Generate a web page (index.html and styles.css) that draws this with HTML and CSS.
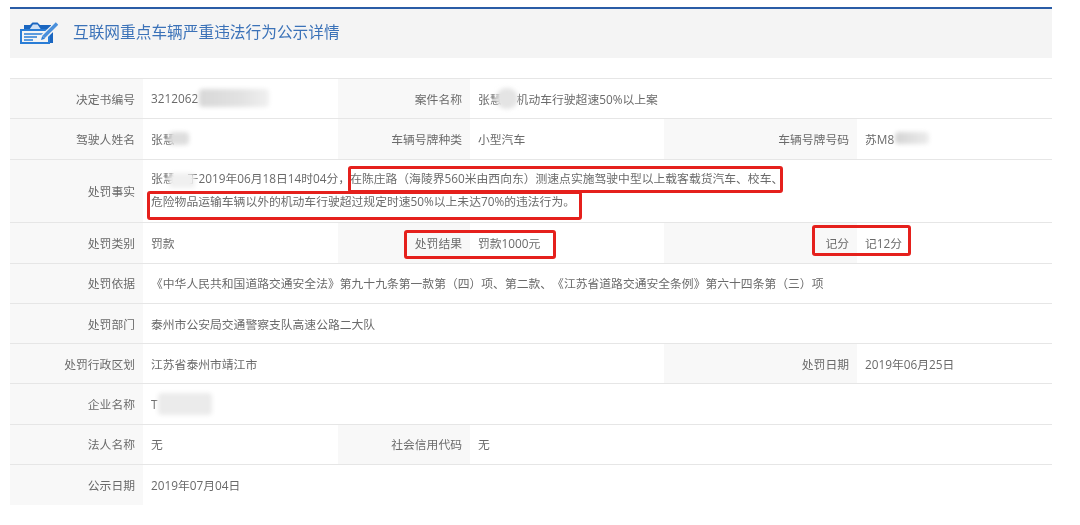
FILE: index.html
```html
<!DOCTYPE html>
<html lang="zh-CN">
<head>
<meta charset="utf-8">
<title>互联网重点车辆严重违法行为公示详情</title>
<link rel="stylesheet" href="styles.css">
</head>
<body>
<main class="page">
  <header class="head">
    <svg class="head-icon" width="38" height="24" viewBox="0 0 38 24" aria-hidden="true">
      <path d="M4 3h6l2.500-2.500h5L20 3h11v5h2v13H4z" fill="#1a66c0"/>
      <path d="M9.500 7.500l3.500-5h4.500l3.500 5z" fill="#cfe0f4"/>
      <path d="M1 8h28v13H1z" fill="#f4f4f4" stroke="#2a7dd6" stroke-width="2"/>
      <path d="M4 12h19M4 15h13M4 18h9" stroke="#2a7dd6" stroke-width="1.400" fill="none"/>
      <path d="M37.500 1.500L23.500 15" stroke="#f4f4f4" stroke-width="6" fill="none"/>
      <path d="M37 1.500L23.500 15" stroke="#4a90dc" stroke-width="3.400" fill="none"/>
      <path d="M21 18l1.200-4 2.800 2.800z" fill="#2a7dd6"/>
    </svg>
    <h1 class="head-title">互联网重点车辆严重违法行为公示详情</h1>
  </header>

  <section class="grid">
    <div class="label">决定书编号</div>
    <div class="value">3212062<span class="smudge smudge-a"></span></div>
    <div class="label">案件名称</div>
    <div class="value span-3">张慧<span class="smudge smudge-b"></span>机动车行驶超速50%以上案</div>

    <div class="label">驾驶人姓名</div>
    <div class="value">张慧<span class="smudge smudge-c"></span></div>
    <div class="label">车辆号牌种类</div>
    <div class="value">小型汽车</div>
    <div class="label">车辆号牌号码</div>
    <div class="value">苏M8<span class="smudge smudge-d"></span></div>

    <div class="label tall">处罚事实</div>
    <div class="value span-5 tall"><p class="fact">张慧<span class="smudge smudge-e"></span>于2019年06月18日14时04分，在陈庄路（海陵界560米由西向东）测速点实施驾驶中型以上载客载货汽车、校车、<br>危险物品运输车辆以外的机动车行驶超过规定时速50%以上未达70%的违法行为。</p></div>

    <div class="label">处罚类别</div>
    <div class="value">罚款</div>
    <div class="label">处罚结果</div>
    <div class="value">罚款1000元</div>
    <div class="label">记分</div>
    <div class="value">记12分</div>

    <div class="label">处罚依据</div>
    <div class="value span-5">《中华人民共和国道路交通安全法》第九十九条第一款第（四）项、第二款、《江苏省道路交通安全条例》第六十四条第（三）项</div>

    <div class="label">处罚部门</div>
    <div class="value span-5">泰州市公安局交通警察支队高速公路二大队</div>

    <div class="label">处罚行政区划</div>
    <div class="value span-3">江苏省泰州市靖江市</div>
    <div class="label">处罚日期</div>
    <div class="value">2019年06月25日</div>

    <div class="label">企业名称</div>
    <div class="value span-5">T<span class="smudge smudge-f"></span></div>

    <div class="label">法人名称</div>
    <div class="value">无</div>
    <div class="label">社会信用代码</div>
    <div class="value span-3">无</div>

    <div class="label last">公示日期</div>
    <div class="value span-5 last">2019年07月04日</div>
  </section>
</main>
<div class="mark mark-1"></div>
<div class="mark mark-2"></div>
<div class="mark mark-3"></div>
<div class="mark mark-4"></div>
</body>
</html>
```
FILE: styles.css
```css
* { box-sizing: border-box; }
html, body { margin: 0; height: 525px; overflow: hidden; background: #fff; }
body {
  position: relative;
  font-family: "Open Sans", "Noto Sans CJK SC", sans-serif;
  font-size: 11.8px;
  color: #6a6a6a;
  text-spacing-trim: space-all;
}
.page { padding: 7px 28px 0 10px; filter: blur(0.35px); }
.head {
  height: 51px;
  border-top: 2px solid #2a5ca6;
  background: #f4f4f4;
  display: flex;
  align-items: center;
  gap: 15px;
  padding: 0 0 4px 10px;
  margin-bottom: 20px;
}
.head-icon { flex: none; margin-top: 4px; }
.head-title { margin: 0; font-size: 15.7px; font-weight: 400; color: #3b72b8; }
.grid {
  display: grid;
  grid-template-columns: 133px 195px 132px 194px 193px 195px;
  grid-template-rows: 40.3px 40.3px 63.7px;
  grid-auto-rows: 40.3px;
  border-top: 1px solid #e6e6e6;
}
.grid > div {
  display: flex;
  align-items: center;
  border-bottom: 1px solid #e6e6e6;
  padding-bottom: 1px;
}
.grid > .last { border-bottom: 0; }
.label {
  justify-content: flex-end;
  padding-right: 8px;
  background: #f8f8f8;
}
.value { padding-left: 8px; white-space: nowrap; }
.span-3 { grid-column: span 3; }
.span-5 { grid-column: span 5; }
.fact { margin: 0; line-height: 23px; }
.smudge {
  display: inline-block;
  vertical-align: middle;
  background: #dedede;
  border-radius: 4px;
  filter: blur(2px);
}
.smudge-a { width: 70px; height: 18px; margin-left: 1px; background: linear-gradient(90deg, #d8d8d8, #e2e2e2 60%, #f0f0f0); }
.smudge-b { width: 22px; height: 21px; border-radius: 10px; background: #e4e4e4; margin: 0 -1px 0 -6px; }
.smudge-c { width: 20px; height: 13px; margin-left: -6px; }
.smudge-d { width: 34px; height: 12px; margin-left: 1px; background: linear-gradient(90deg, #d4d4d4, #ececec); }
.smudge-e { width: 26px; height: 15px; background: #f0f0f0; margin-left: -6px; margin-right: -8px; }
.smudge-f { width: 54px; height: 22px; background: #ebebeb; margin-left: 0; }
.mark {
  position: absolute;
  border: 3px solid #e5201c;
  border-radius: 3px;
}
.mark-1 { left: 348px; top: 166px; width: 435px; height: 27px; }
.mark-2 { left: 147px; top: 191px; width: 435px; height: 29px; }
.mark-3 { left: 404px; top: 230px; width: 152px; height: 29px; }
.mark-4 { left: 812px; top: 225px; width: 99px; height: 31px; }
```
